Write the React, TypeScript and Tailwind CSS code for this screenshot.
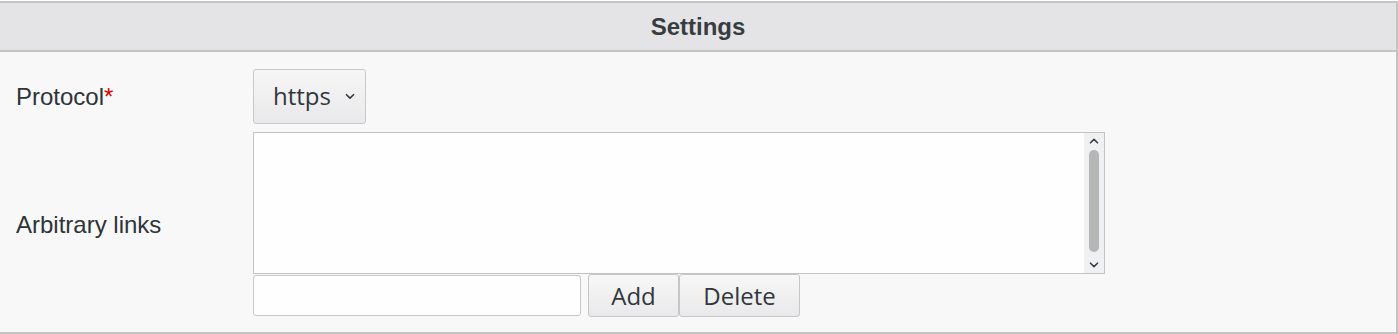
import React from 'react'

const ChevronDown = ({ className = "" }: { className?: string }) => (
  <svg viewBox="0 0 10 6" className={className} fill="none" stroke="currentColor" strokeWidth="1.6" strokeLinecap="round" strokeLinejoin="round">
    <path d="M1.5 1.2 L5 4.6 L8.5 1.2" />
  </svg>
)

const ChevronUp = ({ className = "" }: { className?: string }) => (
  <svg viewBox="0 0 10 6" className={className} fill="none" stroke="currentColor" strokeWidth="1.6" strokeLinecap="round" strokeLinejoin="round">
    <path d="M1.5 4.8 L5 1.4 L8.5 4.8" />
  </svg>
)

const btn = "h-[43px] rounded-[3px] border border-[#c6c6c6] bg-gradient-to-b from-[#f7f7f7] to-[#e9e9eb] text-[24px] text-[#32373c] font-['Open_Sans',sans-serif] leading-none"

const App = () => {
  const labelFont = "font-['Liberation_Sans',Arial,sans-serif] text-[24px] text-[#2f3438]"

  return (
    <div className="w-[1398px] h-[334px] bg-white pt-px">
      <div className="border-y-2 border-r-2 border-[#c4c4c4] bg-[#f8f8f8] h-[333px]">
        <div className="h-[49px] bg-[#e4e4e6] border-b-2 border-[#c4c4c4] flex items-center justify-center">
          <span className="font-['Liberation_Sans',Arial,sans-serif] font-bold text-[24px] text-[#383c41]">Settings</span>
        </div>
        <div className="grid grid-cols-[253px_1fr] pt-[17px]">
          <div className={`flex items-center pl-4 ${labelFont}`}>
            Protocol<span className="text-[#e00000]">*</span>
          </div>
          <div>
            <div className="w-[113px] h-[55px] rounded-[3px] border border-[#c8c8c8] bg-gradient-to-b from-[#f6f6f6] to-[#e9e9eb] flex items-center pl-[19px] pr-[9px] text-[#32373c]">
              <span className="font-['Open_Sans',sans-serif] text-[24px] leading-none pb-[2px]">https</span>
              <ChevronDown className="w-[10px] h-[7px] ml-auto mr-[1px]" />
            </div>
          </div>

          <div className={`flex items-center pl-4 mt-2 ${labelFont}`}>Arbitrary links</div>
          <div className="mt-2">
            <div className="w-[852px] h-[142px] border border-[#c4c4c4] bg-[#fefefe] flex justify-end">
              <div className="w-5 h-full bg-[#eff0f2] flex flex-col items-center text-[#3a3d42]">
                <ChevronUp className="w-[10px] h-[6px] mt-[5px]" />
                <div className="w-[10px] flex-1 rounded-full bg-[#b6b6b6] mt-[6px] mb-[10px]" />
                <ChevronDown className="w-[10px] h-[6px] mb-[5px]" />
              </div>
            </div>
            <div className="flex items-center">
              <input className="w-[328px] h-[41px] rounded-[3px] border border-[#c8c8c8] bg-[#fefefe] outline-none" />
              <button className={`${btn} w-[91px] ml-[7px]`}>Add</button>
              <button className={`${btn} w-[121px]`}>Delete</button>
            </div>
          </div>
        </div>
      </div>
    </div>
  )
}

export default App
